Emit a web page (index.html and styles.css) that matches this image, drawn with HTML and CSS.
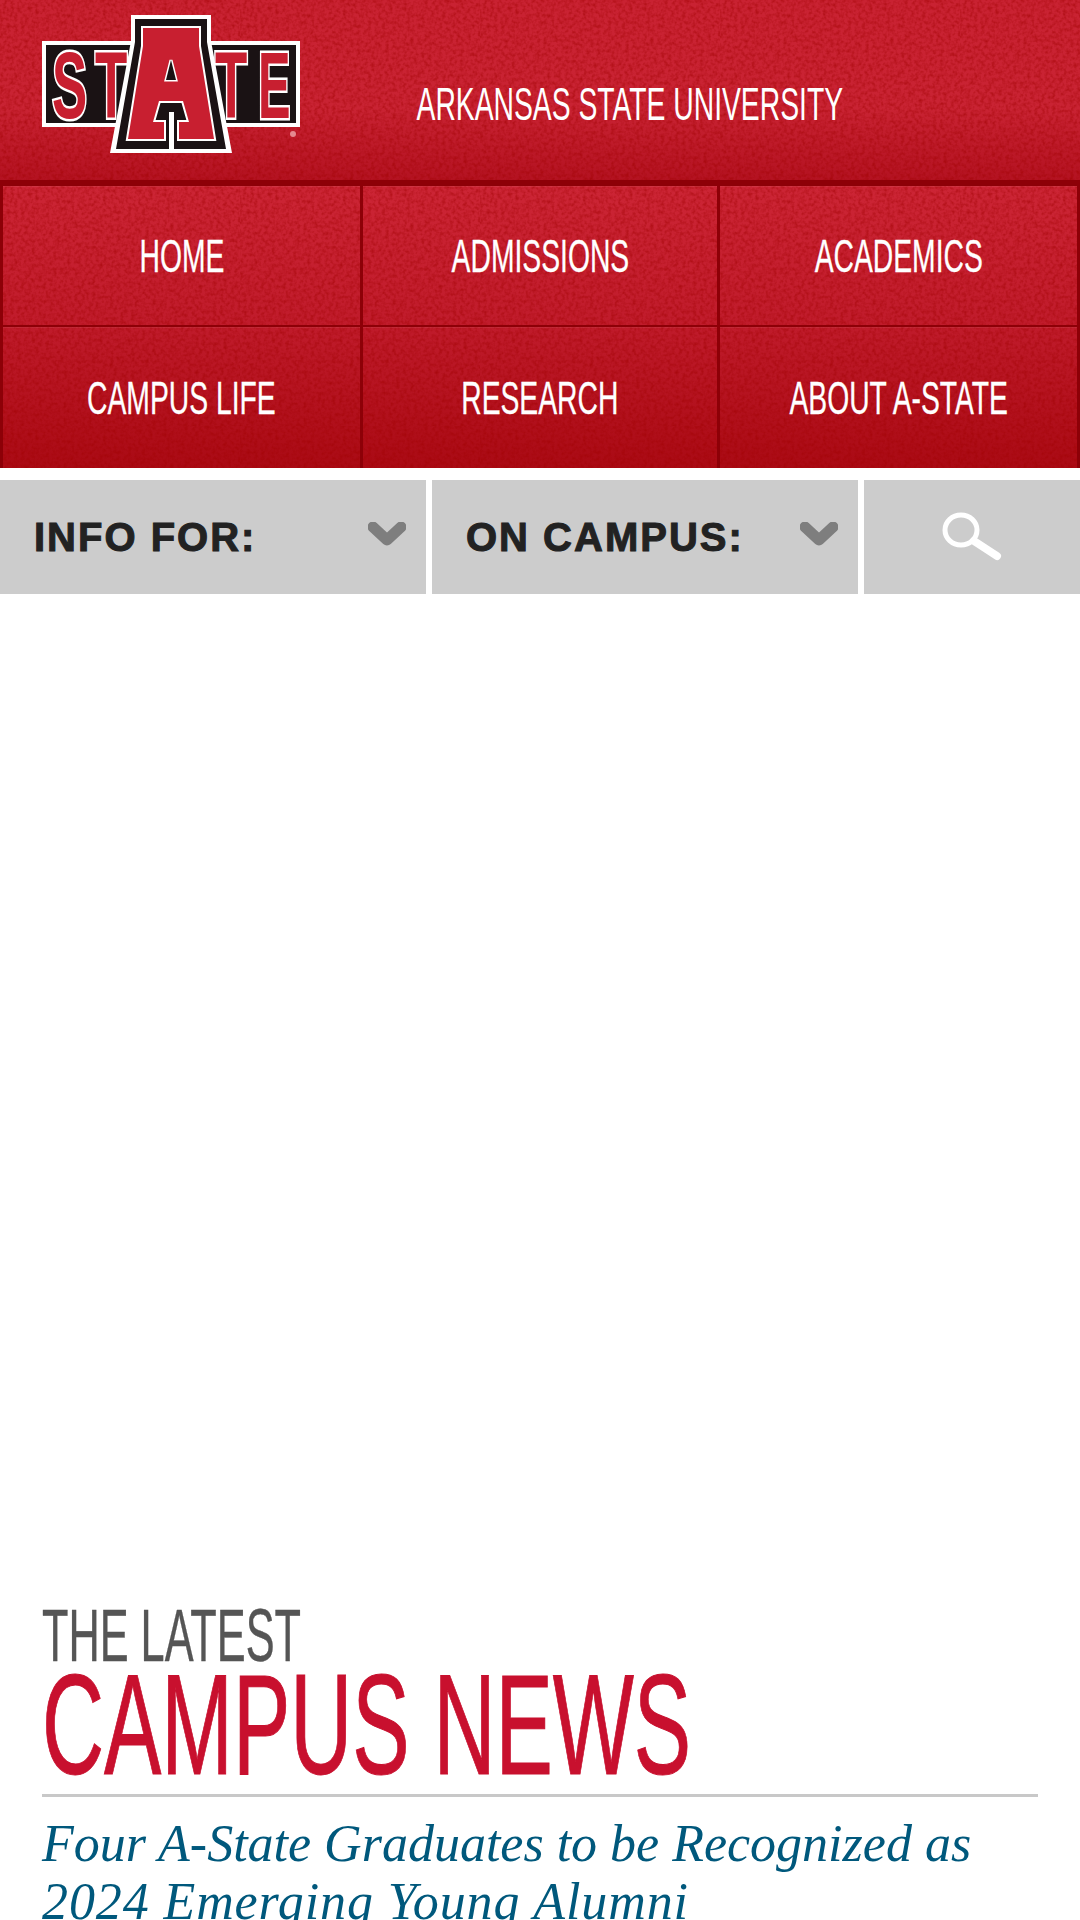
FILE: index.html
```html
<!DOCTYPE html>
<html lang="en">
<head>
<meta charset="utf-8">
<title>Arkansas State University</title>
<link rel="stylesheet" href="styles.css">
</head>
<body>
<header class="site-header">
  <svg class="logo" viewBox="0 0 320 180" width="320" height="180" role="img" aria-label="A-State logo">
    <rect class="l-white" x="42" y="41" width="258" height="86"/>
    <rect class="l-black" x="46" y="45" width="250" height="78"/>
    <g class="l-letter">
      <text transform="translate(52 118) scale(0.8 1.42)">S</text>
      <text transform="translate(95 118) scale(0.8 1.42)">T</text>
      <text transform="translate(215 118) scale(0.8 1.42)">T</text>
      <text transform="translate(258 118) scale(0.74 1.42)">E</text>
    </g>
    <polygon class="l-white" points="131,15 211,15 211,41 232,153 110,153 131,41"/>
    <polygon class="l-black" points="135,19 207,19 207,42 226,149 116,149 135,42"/>
    <polygon class="l-redw" points="143,28 199,28 199,46 214,139 179,139 179,122 189,122 183,101 159,101 153,122 164,122 164,139 128,139 143,46"/>
    <polygon class="l-counter" points="171,60 176,80 166,80"/>
    <rect class="l-white" x="169" y="112" width="5" height="41"/>
    <circle class="l-reg" cx="293" cy="134" r="3"/>
  </svg>
  <div class="site-title"><span class="narrow narrow-title">ARKANSAS STATE UNIVERSITY</span></div>
</header>
<nav class="main-nav">
  <a class="nav-cell"><span class="narrow">HOME</span></a>
  <a class="nav-cell"><span class="narrow">ADMISSIONS</span></a>
  <a class="nav-cell"><span class="narrow">ACADEMICS</span></a>
  <a class="nav-cell"><span class="narrow">CAMPUS LIFE</span></a>
  <a class="nav-cell"><span class="narrow">RESEARCH</span></a>
  <a class="nav-cell"><span class="narrow">ABOUT A-STATE</span></a>
</nav>
<div class="tools">
  <div class="tool">
    <span class="tool-label">INFO FOR:</span>
    <svg class="chev" viewBox="0 0 38 24" width="38" height="24"><polyline points="5,5 19,18 33,5"/></svg>
  </div>
  <div class="tool">
    <span class="tool-label">ON CAMPUS:</span>
    <svg class="chev" viewBox="0 0 38 24" width="38" height="24"><polyline points="5,5 19,18 33,5"/></svg>
  </div>
  <div class="tool tool-search">
    <svg class="mag" viewBox="0 0 62 50" width="62" height="50">
      <ellipse cx="20" cy="18" rx="16" ry="15"/>
      <line class="mag-handle" x1="33" y1="29" x2="56" y2="44"/>
    </svg>
  </div>
</div>
<main class="news">
  <h2 class="news-head">
    <span class="head-small"><span class="cond-small">THE LATEST</span></span>
    <span class="head-big"><span class="cond-big">CAMPUS NEWS</span></span>
  </h2>
  <h3 class="news-title">Four A-State Graduates to be Recognized as<br><span class="news-line2">2024 Emerging Young Alumni</span></h3>
</main>
</body>
</html>
```
FILE: styles.css
```css
* { box-sizing: border-box; }
html, body { margin: 0; padding: 0; }
:root {
  --grain: url("data:image/svg+xml,%3Csvg xmlns='http://www.w3.org/2000/svg' width='240' height='240'%3E%3Cfilter id='n'%3E%3CfeTurbulence type='fractalNoise' baseFrequency='0.28' numOctaves='2' stitchTiles='stitch'/%3E%3CfeColorMatrix values='0 0 0 0 0.35 0 0 0 0 0 0 0 0 0 0 0 0 0 1.1 -0.42'/%3E%3C/filter%3E%3Crect width='240' height='240' filter='url(%23n)'/%3E%3C/svg%3E");
}
body {
  width: 1080px;
  height: 1920px;
  overflow: hidden;
  background: #fff;
  font-family: "Liberation Sans", Arial, sans-serif;
}
.narrow {
  display: inline-block;
  font-family: "Liberation Sans Narrow", "Liberation Sans", sans-serif;
  font-size: 46px;
  line-height: 50px;
  color: #fff;
  white-space: nowrap;
  transform: scaleX(0.615);
  -webkit-text-stroke: 0.3px #fff;
}
.narrow-title { -webkit-text-stroke: 0; }
.site-header {
  height: 186px;
  display: flex;
  align-items: flex-start;
  background: var(--grain), linear-gradient(#c92232 0, #c92333 60%, #b41221 100%);
  border-bottom: 6px solid #8d0007;
}
.logo { flex: none; display: block; }
.l-white { fill: #fff; }
.l-black { fill: #1a1214; }
.l-redw {
  fill: #c81f30;
  stroke: #fff;
  stroke-width: 4px;
  paint-order: stroke;
}
.l-counter {
  fill: #1a1214;
  stroke: #fff;
  stroke-width: 3px;
  paint-order: stroke;
}
.l-reg { fill: #e58a90; }
.l-letter text {
  font-family: "Liberation Sans", sans-serif;
  font-weight: 700;
  font-size: 66px;
  fill: #c81f30;
  stroke: #fff;
  stroke-width: 4px;
  paint-order: stroke;
  vector-effect: non-scaling-stroke;
}
.site-title {
  margin: 79px 0 0 97px;
  width: 425px;
  display: flex;
  justify-content: center;
}
.main-nav {
  display: grid;
  grid-template-columns: 360px 357px 363px;
  grid-template-rows: 141px 141px;
  height: 282px;
  background: var(--grain), linear-gradient(#cc2535 0, #c01b2b 50%, #aa0a14 100%);
}
.nav-cell {
  display: flex;
  align-items: center;
  justify-content: center;
  border-left: 3px solid #8d0007;
  box-shadow: inset 0 1px rgba(255, 255, 255, 0.07);
}
.nav-cell:nth-child(-n+3) { border-bottom: 2px solid #8d0007; }
.nav-cell:nth-child(3n) { border-right: 3px solid #8d0007; }
.tools {
  display: grid;
  grid-template-columns: 426px 426px 216px;
  column-gap: 6px;
  margin-top: 12px;
  height: 114px;
}
.tool {
  display: flex;
  align-items: center;
  justify-content: space-between;
  background: #ccc;
  padding: 0 20px 0 34px;
}
.tool-search { justify-content: center; padding: 0; }
.tool-label {
  color: #222;
  font-size: 40px;
  font-weight: 700;
  letter-spacing: 2px;
  -webkit-text-stroke: 1px #222;
}
.chev { margin-bottom: 6px; }
.chev polyline {
  fill: none;
  stroke: #7e7e7e;
  stroke-width: 11px;
  stroke-linecap: round;
  stroke-linejoin: round;
}
.mag ellipse, .mag line {
  fill: none;
  stroke: #fff;
  stroke-width: 5px;
}
.mag .mag-handle { stroke-width: 8px; stroke-linecap: round; }
.news { padding: 1014px 42px 0; }
.news-head {
  margin: 0;
  font-weight: 400;
  border-bottom: 3px solid #c8c8c8;
  height: 189px;
}
.head-small, .head-big { display: block; white-space: nowrap; }
.cond-small, .cond-big {
  display: inline-block;
  font-family: "Liberation Sans Narrow", "Liberation Sans", sans-serif;
  transform-origin: left center;
}
.cond-small {
  font-size: 74px;
  line-height: 56px;
  color: #555;
  transform: scaleX(0.585);
  -webkit-text-stroke: 0.4px #555;
}
.cond-big {
  font-size: 142px;
  line-height: 116px;
  color: #c8102e;
  transform: scaleX(0.605);
  -webkit-text-stroke: 1px #c8102e;
}
.news-title {
  margin: 18px 0 0;
  color: #00587c;
  font-family: "Liberation Serif", serif;
  font-style: italic;
  font-weight: 400;
  font-size: 52px;
  line-height: 58px;
  white-space: nowrap;
}
.news-line2 { letter-spacing: 0.9px; }
```
